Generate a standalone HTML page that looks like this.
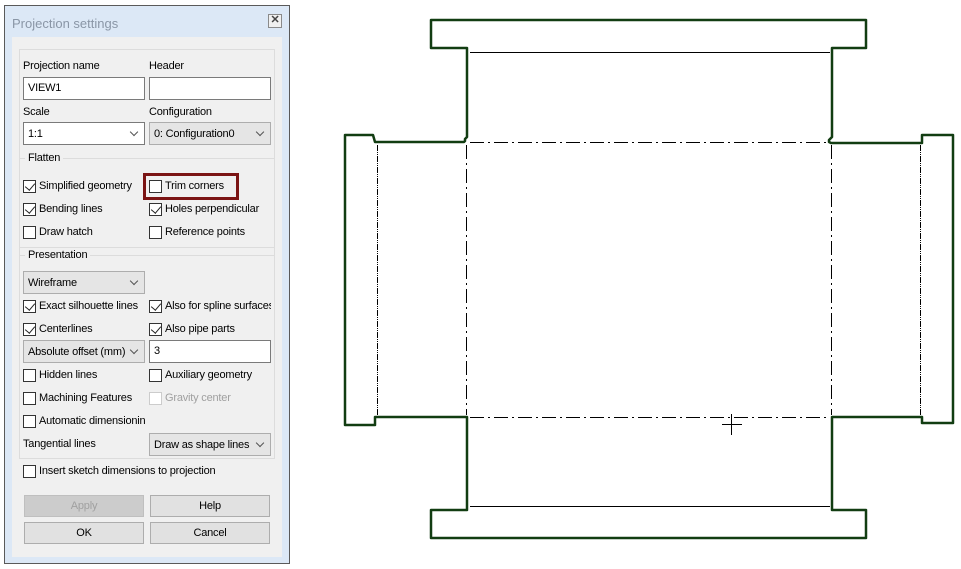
<!DOCTYPE html>
<html><head><style>
*{box-sizing:border-box;margin:0;padding:0}
body{width:961px;height:569px;background:#fff;position:relative;overflow:hidden;font-family:"Liberation Sans",sans-serif;font-size:11px;letter-spacing:-0.2px;color:#000}
.a{position:absolute}
.dlg{left:4px;top:5px;width:286px;height:559px;border:1px solid #5a5a5a;background:#dce8f6}
.title{left:12px;top:16px;color:#8a96a6;font-size:13px;letter-spacing:0}
.close{left:268px;top:14px;width:14px;height:14px;border:1px solid #8a8a8a;background:#f0f0f0;font-size:11px;line-height:11px;text-align:center;color:#444;font-weight:bold}
.panel{left:12px;top:37px;width:270px;height:520px;background:#f0f0f0}
.grp{border:1px solid #dcdcdc}
.lbl{white-space:nowrap}
.inp{background:#fff;border:1px solid #7a7a7a;height:23px;padding:4px 4px}
.cmb{border:1px solid #adadad;background:#e5e5e5;height:23px;padding:5px 4px}
.cmbw{background:#fff;border-color:#7a7a7a}
.cmb:after{content:"";position:absolute;right:7px;top:6px;width:5px;height:5px;border-right:1px solid #555;border-bottom:1px solid #555;transform:rotate(45deg)}
.cb{width:13px;height:13px;border:1px solid #333;background:#fff}
.cb.c:after{content:"";position:absolute;left:3px;top:0px;width:5px;height:8px;border-right:1.5px solid #222;border-bottom:1.5px solid #222;transform:rotate(40deg)}
.btn{border:1px solid #adadad;background:#e1e1e1;height:22px;text-align:center;line-height:20px}
.gl{background:#f0f0f0;padding:0 3px}
</style></head><body>
<div class="a dlg"></div>
<div class="a title">Projection settings</div>
<div class="a close">✕</div>
<div class="a panel"></div>
<div class="a grp" style="left:19px;top:49px;width:256px;height:410px"></div>
<div class="a lbl" style="left:23px;top:60px">Projection name</div>
<div class="a lbl" style="left:149px;top:60px">Header</div>
<div class="a inp" style="left:23px;top:77px;width:122px">VIEW1</div>
<div class="a inp" style="left:149px;top:77px;width:122px"></div>
<div class="a lbl" style="left:23px;top:106px">Scale</div>
<div class="a lbl" style="left:149px;top:106px">Configuration</div>
<div class="a cmb cmbw" style="left:23px;top:122px;width:122px">1:1</div>
<div class="a cmb" style="left:149px;top:122px;width:122px">0: Configuration0</div>

<div class="a grp" style="left:19px;top:158px;width:256px;height:90px"></div>
<div class="a lbl gl" style="left:25px;top:152px">Flatten</div>
<div class="a cb c" style="left:23px;top:180px"></div><div class="a lbl" style="left:39px;top:180px">Simplified geometry</div>
<div class="a cb" style="left:149px;top:180px"></div><div class="a lbl" style="left:165px;top:180px">Trim corners</div>
<div class="a" style="left:143px;top:173px;width:96px;height:27px;border:3px solid #7b1414"></div>
<div class="a cb c" style="left:23px;top:203px"></div><div class="a lbl" style="left:39px;top:203px">Bending lines</div>
<div class="a cb c" style="left:149px;top:203px"></div><div class="a lbl" style="left:165px;top:203px">Holes perpendicular</div>
<div class="a cb" style="left:23px;top:226px"></div><div class="a lbl" style="left:39px;top:226px">Draw hatch</div>
<div class="a cb" style="left:149px;top:226px"></div><div class="a lbl" style="left:165px;top:226px">Reference points</div>

<div class="a grp" style="left:19px;top:255px;width:256px;height:204px"></div>
<div class="a lbl gl" style="left:25px;top:249px">Presentation</div>
<div class="a cmb" style="left:23px;top:271px;width:122px">Wireframe</div>
<div class="a cb c" style="left:23px;top:300px"></div><div class="a lbl" style="left:39px;top:300px">Exact silhouette lines</div>
<div class="a cb c" style="left:149px;top:300px"></div><div class="a lbl" style="left:165px;top:300px;width:106px;overflow:hidden">Also for spline surfaces</div>
<div class="a cb c" style="left:23px;top:323px"></div><div class="a lbl" style="left:39px;top:323px">Centerlines</div>
<div class="a cb c" style="left:149px;top:323px"></div><div class="a lbl" style="left:165px;top:323px">Also pipe parts</div>
<div class="a cmb" style="left:23px;top:340px;width:122px">Absolute offset (mm)</div>
<div class="a inp" style="left:149px;top:340px;width:122px">3</div>
<div class="a cb" style="left:23px;top:369px"></div><div class="a lbl" style="left:39px;top:369px">Hidden lines</div>
<div class="a cb" style="left:149px;top:369px"></div><div class="a lbl" style="left:165px;top:369px">Auxiliary geometry</div>
<div class="a cb" style="left:23px;top:392px"></div><div class="a lbl" style="left:39px;top:392px">Machining Features</div>
<div class="a cb" style="left:149px;top:392px;border-color:#ccc"></div><div class="a lbl" style="left:165px;top:392px;color:#a0a0a0">Gravity center</div>
<div class="a cb" style="left:23px;top:415px"></div><div class="a lbl" style="left:39px;top:415px;width:106px;overflow:hidden">Automatic dimensioning</div>
<div class="a lbl" style="left:23px;top:438px">Tangential lines</div>
<div class="a cmb" style="left:149px;top:433px;width:122px">Draw as shape lines</div>

<div class="a cb" style="left:23px;top:465px"></div><div class="a lbl" style="left:39px;top:465px">Insert sketch dimensions to projection</div>
<div class="a btn" style="left:24px;top:495px;width:120px;color:#a0a0a0;background:#cccccc;border-color:#bfbfbf">Apply</div>
<div class="a btn" style="left:150px;top:495px;width:120px">Help</div>
<div class="a btn" style="left:24px;top:522px;width:120px">OK</div>
<div class="a btn" style="left:150px;top:522px;width:120px">Cancel</div>

<svg class="a" style="left:0;top:0" width="961" height="569">
<g fill="none" stroke="#000" stroke-width="1">
<line x1="470" y1="52.5" x2="830" y2="52.5"/>
<line x1="470" y1="506.5" x2="830" y2="506.5"/>
<g stroke-dasharray="14,4,2,4">
<line x1="470" y1="142.5" x2="830" y2="142.5"/>
<line x1="470" y1="417.5" x2="830" y2="417.5"/>
<line x1="466.5" y1="145" x2="466.5" y2="415"/>
<line x1="831.5" y1="145" x2="831.5" y2="415"/>
</g>
<g stroke-dasharray="6,1,1,1,1,1">
<line x1="377.5" y1="145" x2="377.5" y2="415"/>
<line x1="920.5" y1="145" x2="920.5" y2="415"/>
</g>
<line x1="722" y1="424.5" x2="742" y2="424.5"/>
<line x1="731.5" y1="414" x2="731.5" y2="435"/>
</g>
<path d="M431,20H866V48H832V137l-3,3v2l2,1h1H922V135H953V423H922V417H832V510H866V538H431V510H467V417H375V425H345V135H373L375,142H464l1-1v-2l2-2V48H431Z" fill="none" stroke="#123d12" stroke-width="2.5" stroke-linejoin="round"/>
</svg>
</body></html>
